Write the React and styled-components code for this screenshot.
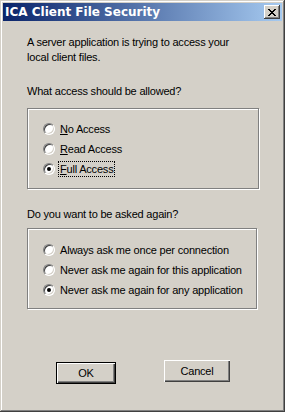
import React from 'react';
import styled, { createGlobalStyle } from 'styled-components';

const GlobalStyle = createGlobalStyle`
  html, body {
    margin: 0;
    padding: 0;
    background: #d4d0c8;
  }
  * { box-sizing: border-box; }
`;

// classic dialog frame
const Window = styled.div`
  width: 285px;
  height: 412px;
  background: #d4d0c8;
  padding: 3px;
  font-family: "Liberation Sans", Arial, sans-serif;
  font-size: 11px;
  letter-spacing: -0.2px;
  color: #000;
  box-shadow:
    inset -1px -1px #404040,
    inset 1px 1px #d4d0c8,
    inset -2px -2px #808080,
    inset 2px 2px #ffffff;
  display: flex;
  flex-direction: column;
`;

const TitleBar = styled.div`
  height: 18px;
  background: linear-gradient(to right, #0a246a, #a6caf0);
  display: flex;
  align-items: center;
  justify-content: space-between;
  padding: 0 2px 0 2px;
`;

const TitleText = styled.span`
  color: #fff;
  font-weight: bold;
  font-family: "DejaVu Sans", Tahoma, sans-serif;
  font-size: 12px;
  letter-spacing: 0;
`;

const CloseButton = styled.div`
  width: 16px;
  height: 14px;
  background: #d4d0c8;
  display: flex;
  align-items: center;
  justify-content: center;
  box-shadow:
    inset -1px -1px #404040,
    inset 1px 1px #ffffff,
    inset -2px -2px #808080;
`;

const Body = styled.div`
  display: flex;
  flex-direction: column;
  padding: 14px 0 0 24px;
  flex: 1;
`;

const Text = styled.div`
  line-height: 15px;
  margin-top: ${p => p.$gap || 0}px;
`;

const GroupBox = styled.div`
  width: ${p => p.$w}px;
  margin-top: ${p => p.$gap}px;
  border: 1px solid #808080;
  box-shadow: inset 1px 1px #ffffff, 1px 1px #ffffff;
  padding: ${p => p.$pt}px 0 0 15px;
  height: 81px;
  display: flex;
  flex-direction: column;
`;

const RadioRow = styled.div`
  height: 20px;
  display: flex;
  align-items: center;
`;

const RadioCircle = styled.span`
  width: 12px;
  height: 12px;
  border-radius: 50%;
  background: #fff;
  border: 1px solid;
  border-color: #808080 #ffffff #ffffff #808080;
  box-shadow: inset 1px 1px #404040, inset -1px -1px #d4d0c8;
  position: relative;
  flex-shrink: 0;
  margin-right: 3px;

  &::after {
    content: '';
    display: ${p => (p.$checked ? 'block' : 'none')};
    position: absolute;
    left: 3px;
    top: 3px;
    width: 4px;
    height: 4px;
    border-radius: 50%;
    background: #000;
  }
`;

const Label = styled.span`
  padding: 1px 1px;
  border: 1px dotted ${p => (p.$focused ? '#000' : 'transparent')};
  line-height: 12px;
  u { text-decoration: underline; }
`;

const ButtonRow = styled.div`
  margin-top: auto;
  margin-bottom: 25px;
  display: flex;
  align-items: flex-start;
  padding-left: 29px;
`;

const Button = styled.div`
  width: ${p => p.$w}px;
  height: 22px;
  margin-top: ${p => (p.$default ? 2 : 0)}px;
  margin-left: ${p => p.$ml || 0}px;
  display: flex;
  align-items: center;
  justify-content: center;
  background: #d4d0c8;
  box-shadow: ${p =>
    p.$default
      ? 'inset 1px 1px #000, inset -1px -1px #000, inset 2px 2px #fff, inset -2px -2px #404040, inset -3px -3px #808080'
      : 'inset 1px 1px #fff, inset -1px -1px #404040, inset -2px -2px #808080'};
`;

function Radio({ checked, focused, children }) {
  return (
    <RadioRow>
      <RadioCircle $checked={checked} />
      <Label $focused={focused}>{children}</Label>
    </RadioRow>
  );
}

export default function App() {
  return (
    <>
      <GlobalStyle />
      <Window>
        <TitleBar>
          <TitleText>ICA Client File Security</TitleText>
          <CloseButton>
            <svg width="8" height="7" viewBox="0 0 8 7" shapeRendering="crispEdges">
              <path d="M0 0h2v1h-2zM6 0h2v1h-2zM1 1h2v1h-2zM5 1h2v1h-2zM2 2h4v1h-4zM3 3h2v1h-2zM2 4h4v1h-4zM1 5h2v1h-2zM5 5h2v1h-2zM0 6h2v1h-2zM6 6h2v1h-2z" fill="#000" />
            </svg>
          </CloseButton>
        </TitleBar>
        <Body>
          <Text>A server application is trying to access your</Text>
          <Text>local client files.</Text>
          <Text $gap={19}>What access should be allowed?</Text>
          <GroupBox $w={232} $gap={9} $pt={10}>
            <Radio><u>N</u>o Access</Radio>
            <Radio><u>R</u>ead Access</Radio>
            <Radio checked focused><u>F</u>ull Access</Radio>
          </GroupBox>
          <Text $gap={18}>Do you want to be asked again?</Text>
          <GroupBox $w={230} $gap={6} $pt={11}>
            <Radio>Always ask me once per connection</Radio>
            <Radio>Never ask me again for this application</Radio>
            <Radio checked>Never ask me again for any application</Radio>
          </GroupBox>
          <ButtonRow>
            <Button $w={60} $default>OK</Button>
            <Button $w={66} $ml={48}>Cancel</Button>
          </ButtonRow>
        </Body>
      </Window>
    </>
  );
}
